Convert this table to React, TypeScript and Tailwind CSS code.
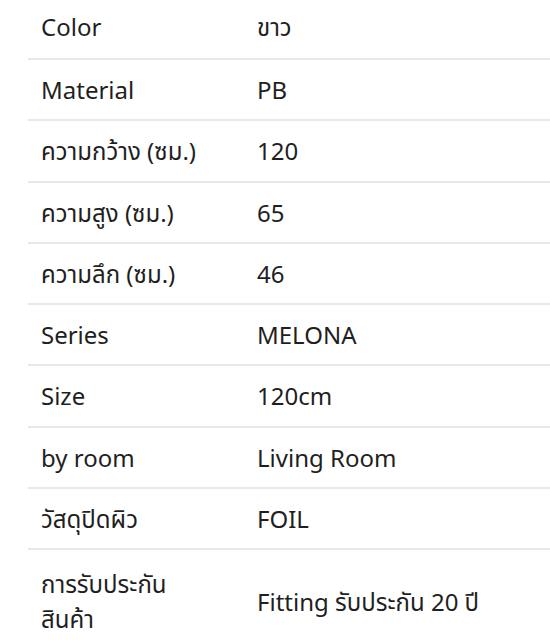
import React from "react";

const rows: [React.ReactNode, string][] = [
  ["Color", "ขาว"],
  ["Material", "PB"],
  ["ความกว้าง (ซม.)", "120"],
  ["ความสูง (ซม.)", "65"],
  ["ความลึก (ซม.)", "46"],
  ["Series", "MELONA"],
  ["Size", "120cm"],
  ["by room", "Living Room"],
  ["วัสดุปิดผิว", "FOIL"],
];

export default function App() {
  return (
    <div
      className="w-[550px] h-[640px] overflow-hidden bg-white text-[#1f1f1f]"
      style={{ fontFamily: '"Noto Sans", "Noto Sans Thai", "Noto Sans Thai UI", sans-serif' }}
    >
      <div className="ml-[28px] flex flex-col">
        {rows.map(([k, v], i) => (
          <div
            key={i}
            className={`flex items-center border-b-2 border-[#e8e8e8] ${i === 0 ? "h-[60px] pb-[5px]" : "h-[61.25px]"}`}
          >
            <div className="w-[229px] pl-[13px] pr-[40px] text-[24px] leading-[35px] shrink-0">{k}</div>
            <div className="text-[24px] leading-[35px]">{v}</div>
          </div>
        ))}
        <div className="flex items-center pt-[16px] pb-[12px]">
          <div className="w-[229px] pl-[13px] pr-[20px] text-[24px] leading-[35px] shrink-0">
            การรับประกัน
            <br />
            สินค้า
          </div>
          <div className="text-[24px] leading-[35px]">Fitting รับประกัน 20 ปี</div>
        </div>
      </div>
    </div>
  );
}
